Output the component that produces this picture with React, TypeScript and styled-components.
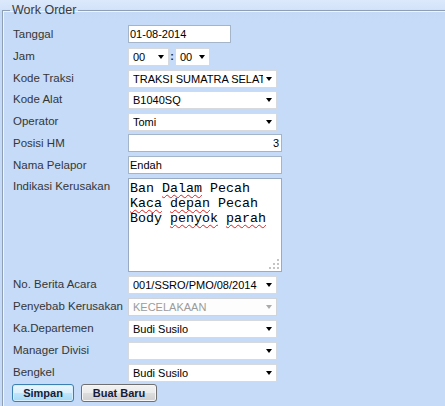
import React from "react";
import styled, { createGlobalStyle } from "styled-components";

const GlobalStyle = createGlobalStyle`
	html, body {
		margin: 0;
		padding: 0;
		width: 445px;
		height: 406px;
		overflow: hidden;
		background: #c5dbf7;
	}
	body {
		font-family: "Liberation Sans", Arial, sans-serif;
	}
`;

const Page = styled.div`
	width: 445px;
	height: 406px;
	padding: 3px 0 0 2px;
	box-sizing: border-box;
	background: linear-gradient(#dce9fb 0, #d3e3f9 9px, #c3d9f5 12px, #c5dbf7 20px);
	overflow: hidden;
`;

const Fieldset = styled.fieldset`
	margin: 0;
	width: 470px;
	min-width: 0;
	min-height: 440px;
	padding: 8px 0 20px 10px;
	border: 1px solid #8d9eb5;
	box-shadow: inset 1px 1px 0 #eef4fc;
	box-sizing: border-box;
`;

const Legend = styled.legend`
	margin-left: -3px;
	padding: 0 2px;
	font-size: 12.5px;
	line-height: 14px;
	color: #3a3a3a;
`;

const FormGrid = styled.div`
	display: grid;
	grid-template-columns: 115px 1fr;
	grid-template-rows: repeat(7, 18px) 94px repeat(5, 18px) 18px;
	row-gap: 3.8px;
	align-items: center;
`;

const Label = styled.label<{ $top?: boolean }>`
	font-size: 11.5px;
	color: #363636;
	line-height: 14px;
	white-space: nowrap;
	align-self: ${(p) => (p.$top ? "start" : "center")};
	padding-top: ${(p) => (p.$top ? "1px" : "0")};
`;

const TextInput = styled.input<{ $w: number; $right?: boolean }>`
	width: ${(p) => p.$w}px;
	height: 18px;
	box-sizing: border-box;
	margin: 0;
	padding: 0 2px 0 1px;
	border: 1px solid #a5b5c9;
	background: #fff;
	font-family: "Liberation Sans", Arial, sans-serif;
	font-size: 11px;
	color: #000;
	text-align: ${(p) => (p.$right ? "right" : "left")};
	outline: none;
`;

const SelectWrap = styled.div<{ $w: number; $disabled?: boolean }>`
	position: relative;
	width: ${(p) => p.$w}px;
	height: 18px;
	&::after {
		content: "";
		position: absolute;
		right: 5px;
		top: 8px;
		border-left: 3.5px solid transparent;
		border-right: 3.5px solid transparent;
		border-top: 4px solid ${(p) => (p.$disabled ? "#aaaaaa" : "#000")};
		pointer-events: none;
	}
`;

const Select = styled.select`
	appearance: none;
	-webkit-appearance: none;
	width: 100%;
	height: 18px;
	box-sizing: border-box;
	margin: 0;
	padding: 0 13px 0 4px;
	border: 1px solid #d6d9dd;
	border-radius: 0;
	background: #fff;
	font-family: "Liberation Sans", Arial, sans-serif;
	font-size: 11px;
	color: #000;
	outline: none;
	&:disabled {
		color: #9b9b9b;
		border-color: #d0d3d7;
		background: #fdfdfd;
		opacity: 1;
	}
`;

const TimeRow = styled.div`
	display: flex;
	align-items: center;
`;

const Colon = styled.span`
	width: 6px;
	text-align: center;
	font-size: 11px;
	font-weight: bold;
	color: #222;
`;

const NoteBox = styled.div`
	width: 154px;
	height: 94px;
	box-sizing: border-box;
	border: 1px solid #98abc2;
	background: #fff;
	padding: 2px 1px;
	font-family: "Liberation Mono", "Courier New", monospace;
	font-size: 13.33px;
	line-height: 15px;
	color: #000;
	white-space: pre;
	overflow: hidden;
	position: relative;
	align-self: start;
`;

const Typo = styled.span`
	text-decoration: underline wavy #e02020;
	text-decoration-thickness: 1px;
	text-decoration-skip-ink: none;
	text-underline-offset: 2px;
`;

const Grip = styled.svg`
	position: absolute;
	right: 1px;
	bottom: 1px;
`;

const ButtonRow = styled.div`
	grid-column: 1 / span 2;
	display: flex;
	gap: 7px;
	margin-left: -1px;
`;

const Button = styled.button<{ $primary?: boolean; $w: number }>`
	width: ${(p) => p.$w}px;
	height: 18px;
	margin: 0;
	padding: 0;
	box-sizing: border-box;
	border-radius: 3px;
	border: 1px solid ${(p) => (p.$primary ? "#3c7fb1" : "#707070")};
	box-shadow: inset 0 0 0 1px ${(p) => (p.$primary ? "#d6eefc" : "#f6f6f6")};
	background: ${(p) =>
		p.$primary
			? "linear-gradient(#eaf6fd 0%, #d9f0fc 50%, #bee6fd 51%, #a7d9f5 100%)"
			: "linear-gradient(#f2f2f2 0%, #ebebeb 50%, #dddddd 51%, #cfcfcf 100%)"};
	font-family: "Liberation Sans", Arial, sans-serif;
	font-size: 11px;
	font-weight: bold;
	color: #151a3a;
	line-height: 15px;
`;

const Dropdown = ({ w, value, disabled }: { w: number; value: string; disabled?: boolean }) => (
	<SelectWrap $w={w} $disabled={disabled}>
		<Select value={value} disabled={disabled} onChange={() => {}}>
			<option value={value}>{value}</option>
		</Select>
	</SelectWrap>
);

const App: React.FC = () => {
	return (
		<Page>
			<GlobalStyle />
			<Fieldset>
				<Legend>Work Order</Legend>
				<FormGrid>
					<Label>Tanggal</Label>
					<TextInput $w={103} defaultValue="01-08-2014" />

					<Label>Jam</Label>
					<TimeRow>
						<Dropdown w={41} value="00" />
						<Colon>:</Colon>
						<Dropdown w={35} value="00" />
					</TimeRow>

					<Label>Kode Traksi</Label>
					<Dropdown w={149} value="TRAKSI SUMATRA SELATAN" />

					<Label>Kode Alat</Label>
					<Dropdown w={149} value="B1040SQ" />

					<Label>Operator</Label>
					<Dropdown w={149} value="Tomi" />

					<Label>Posisi HM</Label>
					<TextInput $w={154} $right defaultValue="3" />

					<Label>Nama Pelapor</Label>
					<TextInput $w={154} defaultValue="Endah" />

					<Label $top>Indikasi Kerusakan</Label>
					<NoteBox>
						{"Ban "}<Typo>Dalam</Typo>{" Pecah\n"}
						<Typo>Kaca</Typo>{" "}<Typo>depan</Typo>{" Pecah\n"}
						{"Body "}<Typo>penyok</Typo>{" "}<Typo>parah</Typo>
						<Grip width="11" height="11" viewBox="0 0 11 11">
							<g fill="#c4c4c4">
								<rect x="8" y="0" width="2" height="2" />
								<rect x="4" y="4" width="2" height="2" />
								<rect x="8" y="4" width="2" height="2" />
								<rect x="0" y="8" width="2" height="2" />
								<rect x="4" y="8" width="2" height="2" />
								<rect x="8" y="8" width="2" height="2" />
							</g>
						</Grip>
					</NoteBox>

					<Label>No. Berita Acara</Label>
					<Dropdown w={149} value="001/SSRO/PMO/08/2014" />

					<Label>Penyebab Kerusakan</Label>
					<Dropdown w={149} value="KECELAKAAN" disabled />

					<Label>Ka.Departemen</Label>
					<Dropdown w={149} value="Budi Susilo" />

					<Label>Manager Divisi</Label>
					<Dropdown w={149} value="" />

					<Label>Bengkel</Label>
					<Dropdown w={149} value="Budi Susilo" />

					<ButtonRow>
						<Button $primary $w={62}>Simpan</Button>
						<Button $w={76}>Buat Baru</Button>
					</ButtonRow>
				</FormGrid>
			</Fieldset>
		</Page>
	);
};

export default App;
